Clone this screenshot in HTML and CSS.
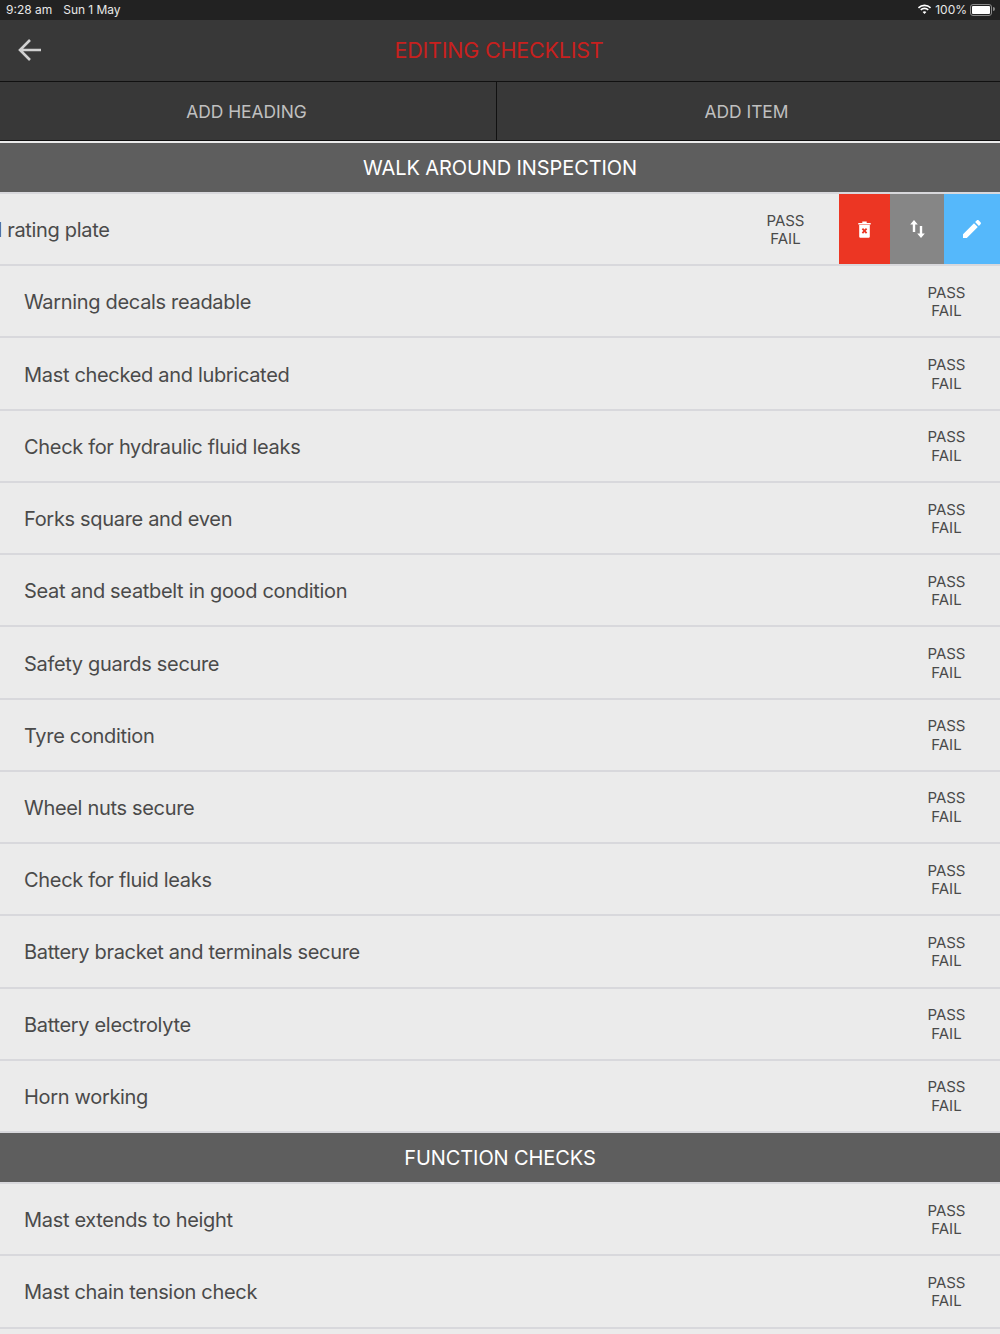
FILE: index.html
```html
<!DOCTYPE html>
<html lang="en">
<head>
    <meta charset="UTF-8">
    <title>Editing Checklist</title>
    <link rel="stylesheet" href="styles.css">
</head>
<body>
    <div class="status-bar">
        <span class="status-time">9:28 am</span>
        <span class="status-date">Sun 1 May</span>
        <span class="status-right">
            <svg class="wifi" width="15" height="11" viewBox="0 0 15 11">
                <path d="M7.500 2.200c2.100 0 4 .8 5.500 2.200l1.100-1.200A9.600 9.600 0 0 0 7.500.5 9.600 9.600 0 0 0 .9 3.200L2 4.400a8 8 0 0 1 5.500-2.200z" fill="#fff"/>
                <path d="M7.500 5.300c1.200 0 2.300.4 3.200 1.200l1.100-1.200a6.300 6.300 0 0 0-8.600 0l1.100 1.200c.9-.8 2-1.200 3.200-1.200z" fill="#fff"/>
                <path d="M7.500 7.200c-.8 0-1.400.3-1.900.7l1.900 2.200 1.900-2.200c-.5-.4-1.100-.7-1.900-.7z" fill="#fff"/>
            </svg>
            <span>100%</span>
            <span class="battery"><span class="battery-fill"></span></span>
        </span>
    </div>

    <header class="nav">
        <svg class="back" width="26" height="24" viewBox="0 0 26 24">
            <path d="M24 12H3M13 2 3 12l10 10" fill="none" stroke="#d0d0d0" stroke-width="2.600"/>
        </svg>
        <h1>EDITING CHECKLIST</h1>
    </header>

    <div class="actions">
        <div class="action">ADD HEADING</div>
        <div class="action">ADD ITEM</div>
    </div>

    <h2 class="section first">WALK AROUND INSPECTION</h2>

    <div class="row swiped">
        <div class="row-slide">
            <span class="row-name">Data plate and rating plate</span>
            <span class="result">PASS<br>FAIL</span>
        </div>
        <div class="row-btns">
            <div class="btn btn-delete">
                <svg width="13" height="17" viewBox="0 0 13 17">
                    <path d="M.3 2h12.400v1.400H.3zM4.300 2V.6h4.400V2z" fill="#fff"/>
                    <path d="M1.200 4h10.600v11.400c0 .8-.6 1.400-1.400 1.400H2.600c-.8 0-1.400-.6-1.400-1.400z" fill="#fff"/>
                    <path d="m4.400 7.700 4.200 4.400m0-4.400-4.200 4.400" stroke="#ec3623" stroke-width="1.800"/>
                </svg>
            </div>
            <div class="btn btn-move">
                <svg width="15" height="18" viewBox="0 0 15 18">
                    <path d="M4 0 .2 4.400h2.600V12h2.400V4.400h2.600zM11 18l3.800-4.400h-2.600V6H9.800v7.600H7.200z" fill="#fff"/>
                </svg>
            </div>
            <div class="btn btn-edit">
                <svg width="18" height="18" viewBox="0 0 18 18">
                    <path d="M0 18v-3.800L11 3.200 14.800 7 3.800 18zM12.100 2.100 13.700.5c.6-.6 1.500-.6 2.100 0l1.700 1.700c.6.6.6 1.500 0 2.100l-1.600 1.600z" fill="#fff"/>
                </svg>
            </div>
        </div>
    </div>
    <div class="row"><span class="row-name">Warning decals readable</span><span class="result">PASS<br>FAIL</span></div>
    <div class="row"><span class="row-name">Mast checked and lubricated</span><span class="result">PASS<br>FAIL</span></div>
    <div class="row"><span class="row-name">Check for hydraulic fluid leaks</span><span class="result">PASS<br>FAIL</span></div>
    <div class="row"><span class="row-name">Forks square and even</span><span class="result">PASS<br>FAIL</span></div>
    <div class="row"><span class="row-name">Seat and seatbelt in good condition</span><span class="result">PASS<br>FAIL</span></div>
    <div class="row"><span class="row-name">Safety guards secure</span><span class="result">PASS<br>FAIL</span></div>
    <div class="row"><span class="row-name">Tyre condition</span><span class="result">PASS<br>FAIL</span></div>
    <div class="row"><span class="row-name">Wheel nuts secure</span><span class="result">PASS<br>FAIL</span></div>
    <div class="row"><span class="row-name">Check for fluid leaks</span><span class="result">PASS<br>FAIL</span></div>
    <div class="row"><span class="row-name">Battery bracket and terminals secure</span><span class="result">PASS<br>FAIL</span></div>
    <div class="row"><span class="row-name">Battery electrolyte</span><span class="result">PASS<br>FAIL</span></div>
    <div class="row"><span class="row-name">Horn working</span><span class="result">PASS<br>FAIL</span></div>

    <h2 class="section">FUNCTION CHECKS</h2>

    <div class="row"><span class="row-name">Mast extends to height</span><span class="result">PASS<br>FAIL</span></div>
    <div class="row"><span class="row-name">Mast chain tension check</span><span class="result">PASS<br>FAIL</span></div>
</body>
</html>
```

FILE: styles.css
```css
html, body {
    height: 1334px;
    overflow: hidden;
}

body {
    font-family: Inter, "Liberation Sans", sans-serif;
    background-color: #ebebeb;
    color: #4a4a4a;
    margin: 0;
    padding: 0;
}

.status-bar {
    display: flex;
    align-items: center;
    box-sizing: border-box;
    height: 20px;
    padding: 0 6px 1px;
    background-color: #222222;
    color: #e8e8e8;
    font-size: 12px;
}

.status-date {
    margin-left: 11px;
    letter-spacing: -0.05px;
}

.status-right {
    display: flex;
    align-items: center;
    gap: 3px;
    margin-left: auto;
}

.battery {
    display: block;
    position: relative;
    width: 22px;
    height: 12px;
    margin-right: 2px;
    padding: 1px;
    box-sizing: border-box;
    border: 1px solid #8a8a8a;
    border-radius: 3px;
}

.battery::after {
    content: "";
    position: absolute;
    right: -4px;
    top: 2px;
    width: 2px;
    height: 4px;
    background-color: #8a8a8a;
    border-radius: 0 2px 2px 0;
}

.battery-fill {
    display: block;
    height: 100%;
    background-color: white;
    border-radius: 1px;
}

.nav {
    display: flex;
    align-items: center;
    justify-content: center;
    position: relative;
    box-sizing: border-box;
    height: 62px;
    padding: 0 2px 2px 0;
    background-color: #383838;
    border-bottom: 1px solid #111111;
}

.back {
    position: absolute;
    left: 17px;
    top: 18px;
}

.nav h1 {
    margin: 0;
    color: #c8201e;
    font-size: 21.500px;
    font-weight: 400;
    letter-spacing: -0.2px;
}

.actions {
    display: flex;
    height: 58px;
    background-color: #383838;
    border-bottom: 1px solid #111111;
}

.action {
    display: flex;
    align-items: center;
    justify-content: center;
    flex: 1;
    box-sizing: border-box;
    padding: 0 4px 0 0;
    color: #c0c0c0;
    font-size: 17.400px;
}

.action:first-child {
    flex: 0 0 497px;
    padding-right: 3px;
    border-right: 1px solid #111111;
}

.section {
    display: flex;
    align-items: center;
    justify-content: center;
    height: 49px;
    margin: 0;
    background-color: #5e5e5e;
    color: white;
    font-size: 20px;
    font-weight: 400;
    letter-spacing: -0.1px;
    border-bottom: 2px solid #d8d8dc;
}

.section.first {
    margin-top: 2px;
}

.row {
    display: flex;
    align-items: center;
    justify-content: space-between;
    box-sizing: border-box;
    height: 72.240px;
    padding: 2px 34.500px 0 24px;
    border-bottom: 2px solid #d8d8dc;
}

.row-name {
    font-size: 20px;
    letter-spacing: -0.32px;
    white-space: nowrap;
}

.result {
    font-size: 15px;
    line-height: 18.500px;
    text-align: center;
}

.swiped {
    padding: 0;
    overflow: hidden;
}

.row-slide {
    display: flex;
    align-items: center;
    justify-content: space-between;
    flex: 0 0 1000px;
    margin-left: -161px;
    padding: 2px 34.500px 0 31px;
    box-sizing: border-box;
}

.row-btns {
    display: flex;
    flex: 0 0 161px;
    height: 100%;
}

.btn {
    display: flex;
    align-items: center;
    justify-content: center;
}

.btn-delete {
    width: 51px;
    background-color: #ec3623;
}

.btn-move {
    width: 54px;
    background-color: #868686;
}

.btn-edit {
    width: 56px;
    background-color: #55b8fb;
}
```
